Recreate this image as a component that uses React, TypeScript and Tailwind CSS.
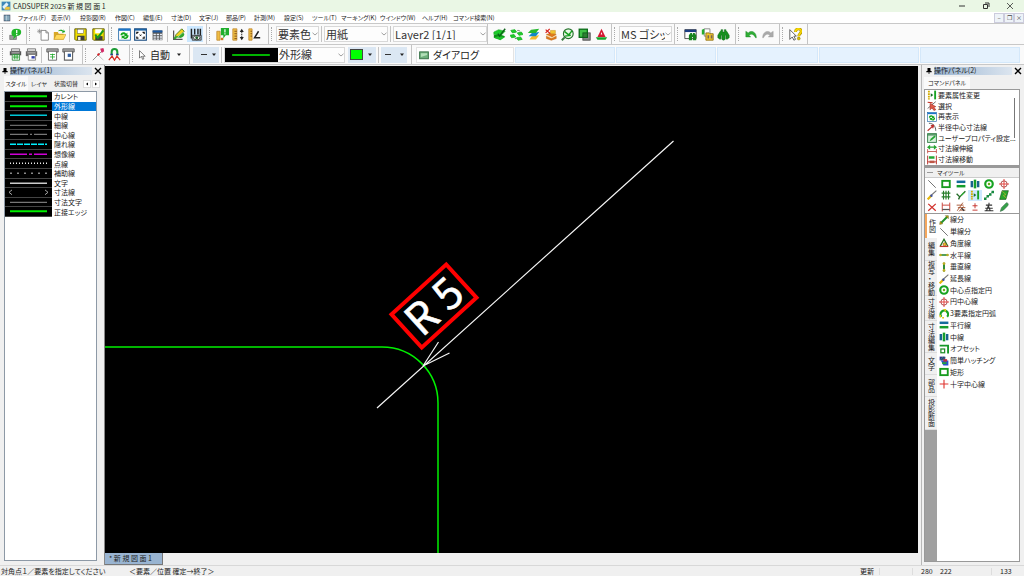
import React from 'react';

const G = '#12a51c';
const glyphs: Record<string, React.ReactNode> = {
  bubble: (<><rect x="1" y="9" width="8" height="5" fill="#9a9a9a" stroke="#777" /><path d="M9 1C5 1 3 3 3 6c0 2 1 4 3 4l-1 4 4-4c4 0 6-2 6-5S13 1 9 1z" fill="#22b52a" /><path d="M9.500 2.500v4M9.500 7.500v1.500" stroke="#fff" strokeWidth="1.600" /></>),
  newdoc: (<><path d="M5 3h6l3 3v9H5z" fill="#fff" stroke="#777" /><path d="M11 3v3h3" fill="none" stroke="#777" /><path d="M3 1v6M0 4h6M1 2l4 4M5 2L1 6" stroke="#888" strokeWidth=".8" /></>),
  open: (<><path d="M1 14V5h5l1 2h6v7z" fill="#d9a826" /><path d="M1 14l3-6h12l-3 6z" fill="#ffd95a" stroke="#b98a1c" strokeWidth=".6" /><path d="M6 4c3-3 6-2 7 0V1.500l2 3.500-4 1 1-1.500C10 3 8 3 6 4z" fill={G} /></>),
  save: (<><path d="M1 1h14v14H2l-1-1z" fill="#f2df00" stroke="#4a4600" /><rect x="4" y="1.500" width="8" height="5" fill="#fff" stroke="#555" strokeWidth=".6" /><rect x="4" y="9.500" width="9" height="5.500" fill="#3d3d3d" /><rect x="5" y="11" width="3" height="4" fill="#eee" /></>),
  savecheck: (<><path d="M1 1h14v14H2l-1-1z" fill="#f2df00" stroke="#4a4600" /><rect x="4" y="1.500" width="8" height="5" fill="#fff" /><rect x="4" y="10" width="9" height="5" fill="#3d3d3d" /><path d="M4 8l3 4 7-9" fill="none" stroke="#18981e" strokeWidth="2.500" /></>),
  refresh: (<><rect x=".8" y="1" width="14.400" height="14" fill="#fff" stroke="#1b63a5" /><path d="M1 2.200h14" stroke="#1b75c8" strokeWidth="2.500" /><path d="M3 9c0-4 5-5 7-2l1.500-1.500V10H7l1.500-1.500C7 7 5.500 8 5 9z" fill={G} /><path d="M13 9c0 5-5 6-7 3l-1.500 1.500V9.500H9L7.500 11c1.500 1.500 3 .5 3.500-2z" fill={G} /></>),
  expand: (<><rect x=".8" y="1" width="14.400" height="14" fill="#fff" stroke="#174a80" strokeWidth="1.400" /><path d="M1 2.200h14" stroke="#1b63a5" strokeWidth="2" /><path d="M3.500 7.500V5.500h2M10.500 5.500h2v2M3.500 10.500V12.500h2M10.500 12.500h2v-2" fill="none" stroke="#111" strokeWidth="1.500" /><path d="M7 8l2 2m0-2l-2 2" stroke="#111" /></>),
  grid: (<><rect x="2" y="3" width="12" height="12" fill="#555" /><rect x="2" y="3" width="12" height="2.500" fill="#1c58a0" /><path d="M3 7h3v2H3zM7 7h3v2H7zM11 7h2.500v2H11zM3 10h3v2H3zM7 10h3v2H7zM11 10h2.500v2H11zM3 13h3v1.500H3zM7 13h3v1.500H7zM11 13h2.500v1.500H11z" fill="#e8eef8" /></>),
  pencil: (<><path d="M2 3v11h11" stroke="#555" fill="none" strokeWidth="1.500" /><path d="M3 13l2-5 7-7 3 3-7 7z" fill="#f4d221" stroke="#33701a" /><path d="M2 14c1-5 5-3 7-5s5-4 6-2-3 6-6 5-4 2-7 2z" fill="#31a52e" /><path d="M5 13l8-7" stroke="#b7e5a0" /></>),
  measure: (<><path d="M3 1v12M7 1v7M11 1v7M14 1v10" stroke="#222" strokeWidth="1.800" /><path d="M4 9h11v6H4z" fill="#a8b7c0" stroke="#333" /><ellipse cx="9.500" cy="12" rx="4" ry="2.500" fill="#fff" stroke="#222" /><circle cx="9.500" cy="12" r="1.800" fill="#21602c" /></>),
  dimbubble: (<><path d="M1 4h4v11H1z" fill="#efbc42" stroke="#c08a35" /><path d="M6 12h3v3H6z" fill="#d07720" /><path d="M6 0h10v9h-4l-3 4V9H6z" fill="#1fae2c" /><path d="M11 1.500v4M11 6.500v1.500" stroke="#fff" strokeWidth="1.500" /></>),
  dimv: (<><path d="M1 1h5v14H1z" fill="#eebc42" stroke="#c08a35" /><path d="M3 4h3M3 7h3M3 10h3M3 13h3" stroke="#724312" /><path d="M12 4v8" stroke="#222" strokeWidth="1.200" strokeDasharray="2 1" /><path d="M9.500 5L12 1l2.500 4zM9.500 11L12 15l2.500-4z" fill="#222" /></>),
  diml: (<><path d="M1 1h4v14H1z" fill="#eebc42" stroke="#c08a35" /><path d="M3 4h2M3 7h2M3 10h2" stroke="#724312" /><path d="M13 4L8 12h7" fill="none" stroke="#222" strokeWidth="1.800" /></>),
  layercheck: (<><path d="M1 9l5-2 9 3-6 4-8-2z" fill="#0d8f17" /><path d="M1 5l6-3 8 2-5 5-9-1z" fill="#1ccb2a" stroke="#129c1c" strokeWidth=".6" /><path d="M1 12l5-2 9 1-6 4z" fill="#1cc02a" /><path d="M6 7l2 3 7-9" fill="none" stroke="#0c6117" strokeWidth="1.800" /></>),
  layers2: (<><path d="M1 3l5-1 2 3-5 1zM9 6l5-1 2 3-5 1zM0 9l5-1 2 3-5 1zM8 12l5-1 2 3-5 1z" fill="#1ecb2a" stroke="#18b522" /><path d="M9 3c2 0 3 0 3 1M6 13h2" stroke="#555" fill="none" /></>),
  layerstack: (<><path d="M3 14l3-4 9-1-4 5z" fill="#f3b82c" /><path d="M2 10l4-4 9-1-4 5z" fill="#1388c5" /><path d="M1 6l4-4 10-1-4 5z" fill="#25b82e" /></>),
  layerorange: (<><path d="M3 8l6-2 6 2-5 3zM3 10l6 3 6-3v3l-6 2-6-2z" fill="#e27a1c" stroke="#b4600a" strokeWidth=".6" /><path d="M3 9l7 3 5-3" stroke="#fbd08a" fill="none" /><path d="M2 2l6 5M2 6l5-5" stroke="#d8201a" strokeWidth="1.500" fill="none" /><path d="M8 3h6v4H8z" fill="#f1c532" stroke="#c98c1c" strokeWidth=".6" /></>),
  zoomlayer: (<><circle cx="9" cy="7" r="6" fill="#eaf8e7" stroke="#25722c" strokeWidth="1.400" /><path d="M4.500 11.500L1 15" stroke="#3a7a40" strokeWidth="2.500" /><path d="M4.500 4.500l5 4 4-5M5 10l7-1" stroke="#17a020" strokeWidth="1.800" fill="none" /></>),
  squares: (<><rect x="6" y="6" width="9" height="9" fill="#888" stroke="#444" /><rect x="1.500" y="1.500" width="10" height="10" fill="#3fc046" stroke="#0a6b18" strokeWidth="1.600" /><rect x="6" y="6" width="5.500" height="5.500" fill="#2f7e34" stroke="#0a5b18" /></>),
  triangle: (<><path d="M8 1l5 10H3z" fill="#d41832" /><path d="M8 5l1 3H7z" fill="#fff" /><path d="M1 11.500h14l-2 3H3z" fill="#16a62b" /></>),
  findwin: (<><path d="M1 2h14v11H1z" fill="#fff" stroke="#333" /><path d="M1 3.500h14" stroke="#1b3d82" strokeWidth="3" /><path d="M6 15V9l2-3h2v2h1V6h2l2 3v6h-4v-4h-1v4z" fill="#17831f" /></>),
  finddoc: (<><path d="M4 1h7v9H4z" fill="#fff" stroke="#777" /><path d="M1 2l3-1v7H1z" fill="#25ac2e" /><path d="M6 6h4l1 1h4v8H6z" fill="#f0c52d" stroke="#8d6b0f" /><path d="M8 9h2v4H8zM12 9h2v4h-2z" fill="#765" /></>),
  binocular: (<path d="M1 9l3-5h1V2h2v3h2V2h2v2h1l3 5v3l-3 2-1-1V9h-1v5l-2 1-2-1V9H5v4l-1 1-3-2z" fill="#178f20" stroke="#0c6a16" strokeWidth=".6" />),
  undo: (<path d="M1 4v7h6L5 9c3-3 6-1 8 3h1C14 5 8 2 4 6z" fill="#2fae35" stroke="#167b20" strokeWidth=".5" />),
  redo: (<path d="M15 4v7H9l2-2C8 6 5 8 3 12H2C2 5 8 2 12 6z" fill="#aaa" stroke="#999" strokeWidth=".5" />),
  help: (<><path d="M1 2v12l3-3 2 4 2-1-2-4h3z" fill="#fff" stroke="#444" /><path d="M8 5c0-5 7-5 7-1 0 3-3 3-3 6" fill="none" stroke="#a88b00" strokeWidth="3.500" /><path d="M8 5c0-5 7-5 7-1 0 3-3 3-3 6" fill="none" stroke="#f8d900" strokeWidth="2" /><circle cx="12" cy="13" r="1.800" fill="#d9bc00" stroke="#776300" strokeWidth=".5" /></>),
  printg: (<><path d="M3 1h10v3H3z" fill="#eee" stroke="#666" /><path d="M1 4h14v5H1z" fill="#555" /><path d="M3 6h10" stroke="#ddd" /><path d="M4 8h9v7H4z" fill="#fff" stroke="#26802f" /><path d="M5 10h7M5 12h7M7 8v6M10 8v6" stroke="#23a32d" /></>),
  printb: (<><path d="M3 1h10v3H3z" fill="#eee" stroke="#666" /><path d="M1 4h14v6H1z" fill="#666" /><path d="M3 6h10" stroke="#ddd" /><path d="M4 8h9v7H4z" fill="#fff" stroke="#777" /><path d="M8 10h4v3H8z" fill="#313eab" /></>),
  plotg: (<><path d="M1 1h14v4H1z" fill="#aaa" stroke="#555" /><path d="M3 4h10v11H3z" fill="#fff" stroke="#555" /><path d="M5 8h6M5 11h6M8 7v7" stroke="#20a82a" /></>),
  plotb: (<><path d="M1 1h14v4H1z" fill="#aaa" stroke="#555" /><path d="M3 4h10v11H3z" fill="#fff" stroke="#666" strokeWidth="1.400" /><path d="M7 7h4v4H7z" fill="#315ea0" /></>),
  snap: (<><path d="M1 15L14 2" stroke="#777" /><path d="M10 1l4-1 1 4-3 2z" fill="#d42b68" /><path d="M7 7l2 2" stroke="#d7232a" strokeWidth="2.500" /><path d="M9 10l5 5" stroke="#777" strokeDasharray="1 1" /></>),
  magnet: (<><path d="M4.500 9V5c0-5 7-5 7 0v4" fill="none" stroke="#1b9a34" strokeWidth="2.500" /><path d="M3 8h3M10 8h3" stroke="#263d91" strokeWidth="2" /><path d="M1 15l4-5 3 5 3-5 4 5" stroke="#d52f25" strokeWidth="1.500" fill="none" /></>),
  cursor: (<path d="M4 1v12l3-3 2 5 2-1-2-4h4z" fill="#fff" stroke="#333" />),
  dialog: (<><rect x="1" y="3" width="14" height="11" fill="#6eaf7c" stroke="#346f45" strokeWidth="1.500" /><path d="M3 5h10v3L3 11z" fill="#b2dfb8" /></>),
  dline: (<path d="M2 2l12 12" stroke="#555" strokeWidth="1.300" />),
  rect: (<rect x="2" y="3" width="12" height="10" fill="#fff" stroke="#189b1f" strokeWidth="3" />),
  parallel: (<><path d="M1 4.500h14" stroke="#136b9a" strokeWidth="4" /><path d="M1 11.500h14" stroke="#149d2a" strokeWidth="4" /></>),
  center: (<><path d="M3 3v10M13 3v10" stroke="#17628e" strokeWidth="4" /><path d="M8 1v14" stroke="#159d2b" strokeWidth="4" /></>),
  circle: (<><circle cx="8" cy="8" r="6" fill="#fff" stroke="#18a322" strokeWidth="3.500" /><circle cx="8" cy="8" r="2" fill="#6dac1c" /></>),
  cross: (<><circle cx="8" cy="8" r="5" fill="none" stroke="#a24a48" strokeWidth="1.500" /><path d="M8 0v16M0 8h16" stroke="#e43d38" strokeWidth="1.500" /></>),
  line: (<><path d="M2 14L14 2" stroke="#24912a" strokeWidth="3" /><path d="M1 15l1-5 4 4zM10 1h5v5z" fill="#bda41c" stroke="#52520c" strokeWidth=".6" /></>),
  ext: (<><path d="M5 10l10-9" stroke="#777" strokeWidth="1.800" /><path d="M1 15l6-6" stroke="#e4b70b" strokeWidth="3.500" /><circle cx="7" cy="9" r="2" fill="#3e51a0" /></>),
  hash: (<path d="M4 1v14M8 1v14M12 1v14M1 5h14M1 11h14" stroke="#277d2a" strokeWidth="1.800" />),
  trim: (<><path d="M1 6l5 5 9-9M6 11l-2 4" fill="none" stroke="#246c28" strokeWidth="2.200" /><path d="M8 9l5-5" stroke="#38b33e" strokeWidth="2" /></>),
  attr: (<><path d="M3 1v14" stroke="#d4ad00" strokeWidth="3" strokeDasharray="3 1" /><path d="M13 1v14" stroke="#19a424" strokeWidth="3" /><path d="M6 5l4 3-4 3z" fill="#167125" /></>),
  dots: (<><path d="M2 14L14 2" stroke="#888" /><path d="M0 12h4v4H0zM4 8h4v4H4zM8 5h4v4H8zM12 1h4v4h-4z" fill="#168b41" /></>),
  hatch: (<><path d="M5 1h10l-4 14H1z" fill="#27a62e" stroke="#174f18" /><path d="M5 2l6 5-4 2 5 4" stroke="#d1b82d" fill="none" /></>),
  x: (<path d="M2 3l12 11M14 3L2 14" stroke="#d0302b" strokeWidth="2" />),
  dim: (<><path d="M2 1v14M14 1v14M2 5h12" stroke="#c84038" fill="none" strokeWidth="1.500" /><path d="M2 12h12" stroke="#555" strokeWidth="2" /></>),
  dims: (<><path d="M2 14L11 1M5 15l7-8M1 5h11M3 9h12M7 13h8" stroke="#a75735" strokeWidth="1.500" /><path d="M9 10l4 4" stroke="#333" strokeWidth="2" /></>),
  pm: (<path d="M8 2v8M4 6h8M4 13h8" stroke="#c4322b" strokeWidth="1.500" />),
  weld: (<path d="M8 1v4M3 5h10M2 10h12M4 14l3-8 3 8M1 14h14" fill="none" stroke="#333" strokeWidth="1.700" />),
  brush: (<path d="M2 15l2-6 8-8c4 1 3 4 1 6l-6 6z" fill="#35a148" stroke="#457151" />),
  angle: (<><path d="M2 13L8 2l6 11" fill="none" stroke="#267623" strokeWidth="2" /><path d="M1 13.500h14" stroke="#c4382d" strokeWidth="2" /><circle cx="9" cy="10" r="2.500" fill="#edc829" stroke="#92431c" /></>),
  hline: (<><path d="M1 8h14" stroke="#25862a" strokeWidth="2.500" /><circle cx="2.500" cy="8" r="2" fill="#c0ad24" /><circle cx="13.500" cy="8" r="2" fill="#c0ad24" /></>),
  vline: (<><path d="M8 1v14" stroke="#25862a" strokeWidth="3" /><circle cx="8" cy="2.500" r="2.200" fill="#c0ad24" /><circle cx="8" cy="13.500" r="2.200" fill="#c0ad24" /></>),
  arc3: (<><path d="M4 12.500a6 6 0 1 1 9 0" fill="none" stroke="#18a322" strokeWidth="3.500" /><path d="M2 9v4M5 14h3M7 0h3v4" stroke="#e4c817" strokeWidth="2.500" fill="none" /></>),
  offset: (<><path d="M1 2.500h13.500V15" fill="none" stroke="#18982a" strokeWidth="3" /><rect x="3" y="8" width="6" height="6" fill="#fff" stroke="#228e29" strokeWidth="2" /></>),
  qhatch: (<><path d="M1 1h9v6H1z" fill="#31308f" /><path d="M2 6l5-5M5 7l5-5" stroke="#3dc341" /><path d="M3 7h12v8H7z" fill="#2753d2" /><path d="M7 5h6v4H7z" fill="#bb3240" /><path d="M5 10h7v3H5z" fill="#24a33c" /></>),
  plus: (<path d="M8 1v14M1 8h14" stroke="#e03530" strokeWidth="1.800" />),
  select: (<><path d="M1 2l8 1" stroke="#c23226" strokeWidth="2" fill="none" /><path d="M14 1L1 12" stroke="#444" strokeWidth="1.200" /><path d="M5 4v10l3-3 3 4 3-1-3-4 3-1z" fill="#e05a48" stroke="#a52b22" /></>),
  radius: (<><path d="M3 2c7 0 11 5 11 12" fill="none" stroke="#555" strokeWidth="1.500" /><path d="M1 14L11 5M11 5l-5 1M11 5l-2 5" stroke="#bb2e2b" strokeWidth="1.800" fill="none" /></>),
  prop: (<><rect x="1" y="1" width="14" height="14" fill="#d9f0dc" stroke="#35814a" strokeWidth="1.500" /><path d="M1 3h14" stroke="#35814a" strokeWidth="2" /><path d="M4 13l2-4 6-5 2 2-6 5z" fill="#22a532" /></>),
  stretch: (<><path d="M1 8v7M15 8v7M1 12h14" stroke="#c0443b" strokeWidth="1.300" /><path d="M5 4V1L0 5l5 4V6h6v3l5-4-5-4v3z" fill="#26a42f" /></>),
  move: (<><path d="M1 1v14M15 1v14M1 11h14" stroke="#b83129" strokeWidth="1.500" /><path d="M3 2h9v4H3z" fill="#25a733" /><path d="M4 9h8v4H4z" fill="#be5646" /></>),
  app: (<><rect x="1" y="1" width="14" height="14" fill="#3e88b8" /><path d="M2 9L9 2l3 4-7 7z" fill="#e4f3fa" /><path d="M8 9h6v5H5z" fill="#f0c43b" /></>),
  menuapp: (<><rect x="2" y="2" width="12" height="12" fill="#6a92ab" stroke="#445" /><path d="M3 6h10M3 10h10M7 3v10" stroke="#dce8ee" /></>),
};

function Icon({ n, className = 'size-3.5' }: { n: string; className?: string }) {
  return <svg viewBox="0 0 16 16" aria-hidden="true" className={`shrink-0 ${className}`}>{glyphs[n]}</svg>;
}

function Tool({ n, label, className = 'w-4' }: { n: string; label: string; className?: string }) {
  return <button type="button" aria-label={label} className={`flex h-4 shrink-0 items-center justify-center ${className}`}><Icon n={n} className="size-[13px]" /></button>;
}

function Group({ className, children }: { className: string; children: React.ReactNode }) {
  return (
    <div className={`flex h-full shrink-0 items-center border-r border-[#c4c4c4] pl-0.5 ${className}`}>
      <span className="mr-1 h-3.5 shrink-0 border-l border-dotted border-[#aaa]" />
      {children}
    </div>
  );
}

const Sep = () => <span className="mx-0.5 h-4 w-px shrink-0 bg-[#c4c4c4]" />;
const Down = () => <svg viewBox="0 0 6 4" aria-hidden="true" className="h-1 w-1.5 shrink-0"><path d="M1 .5h4L3 3z" fill="#222" /></svg>;

function Combo({ label, value, className, children }: { label: string; value: string; className: string; children?: React.ReactNode }) {
  return (
    <div className={`flex h-4 shrink-0 items-center border border-[#d8d8d8] bg-[#fdfdfd] ${className}`}>
      {children}
      <select aria-label={label} className="h-full min-w-0 grow appearance-none bg-transparent pl-px text-[11px] leading-none text-[#333] outline-none">
        <option>{value}</option>
      </select>
      <svg viewBox="0 0 6 4" aria-hidden="true" className="h-1 w-1.5 shrink-0"><path d="M.5 .8L3 3 5.500 .8" fill="none" stroke="#888" strokeWidth=".8" /></svg>
    </div>
  );
}

const menus = ['ファイル(F)', '表示(V)', '投影図(R)', '作図(C)', '編集(E)', '寸法(D)', '文字(J)', '部品(P)', '計測(M)', '設定(S)', 'ツール(T)', 'マーキング(K)', 'ウインドウ(W)', 'ヘルプ(H)', 'コマンド検索(N)'];

const styles: [string, string, number, string][] = [
  ['カレント', '#00f000', 2, ''], ['外形線', '#00f000', 2, ''], ['中線', '#00c8d8', 1.5, ''], ['細線', '#888', 1, ''],
  ['中心線', '#999', 1, '18 2 2 2'], ['隠れ線', '#00f0ff', 1.5, '6 1'], ['想像線', '#d000d8', 1.5, '17 2 3 2'], ['点線', '#eee', 1.5, '1 2'],
  ['補助線', '#888', 1.5, '2 5'], ['文字', '#ccc', 1.5, ''], ['寸法線', 'arrow', 1, ''], ['寸法文字', '#999', 1, ''], ['正接エッジ', '#00f000', 2, ''],
];

const commands: [string, string][] = [['attr', '要素属性変更'], ['select', '選択'], ['refresh', '再表示'], ['radius', '半径中心寸法線'], ['prop', 'ユーザープロパティ設定...'], ['stretch', '寸法線伸縮'], ['move', '寸法線移動']];

const drawTools: [string, string][] = [['line', '線分'], ['dline', '単線分'], ['angle', '角度線'], ['hline', '水平線'], ['vline', '垂直線'], ['ext', '延長線'], ['circle', '中心点指定円'], ['cross', '円中心線'], ['arc3', '3要素指定円弧'], ['parallel', '平行線'], ['center', '中線'], ['offset', 'オフセット'], ['qhatch', '簡単ハッチング'], ['rect', '矩形'], ['plus', '十字中心線']];

const myTools = ['dline', 'rect', 'parallel', 'center', 'circle', 'cross', 'ext', 'hash', 'trim', 'attr', 'dots', 'hatch', 'x', 'dim', 'dims', 'pm', 'weld', 'brush'];

const sideTabs: [string, string][] = [['編集', 'h-[23px]'], ['複写・移動', 'h-[35px]'], ['寸法線', 'h-[25px]'], ['寸法編集', 'h-[32px]'], ['文字', 'h-[22px]'], ['部品', 'h-[22px]'], ['投影断面', 'h-[33px]']];

function PanelTitle({ children }: { children: string }) {
  return (
    <header className="flex h-[11px] shrink-0 items-center text-[7px] leading-none">
      <svg viewBox="0 0 8 8" aria-hidden="true" className="mx-0.5 size-1.5 shrink-0"><path d="M2 0h4v4h1.500v1.500h-3V8h-1V5.500h-3V4H2z" fill="#000" /></svg>
      <h2 className="flex h-2 grow items-center bg-linear-to-r from-[#99b4d1] to-[#dce5ef] whitespace-nowrap">{children}</h2>
      <button type="button" aria-label="パネルを閉じる" className="mx-0.5 flex size-2 shrink-0 items-center">
        <svg viewBox="0 0 8 8" className="size-2"><path d="M1 1l6 6M7 1L1 7" stroke="#000" strokeWidth="1.400" /></svg>
      </button>
    </header>
  );
}

function LeftPanel() {
  return (
    <aside className="flex w-[105px] shrink-0 flex-col border-r border-[#888] bg-[#f0f0f0]">
      <PanelTitle>操作パネル(1)</PanelTitle>
      <div role="tablist" className="flex h-[15px] shrink-0 items-center pl-1 text-[6px] leading-none whitespace-nowrap">
        <button type="button" role="tab" aria-selected="true" className="h-full w-[24px] bg-[#fafafa]">スタイル</button>
        <button type="button" role="tab" aria-selected="false" className="h-3 w-[22px]">レイヤ</button>
        <button type="button" role="tab" aria-selected="false" className="h-3 w-[32px]">状態切替</button>
        <button type="button" aria-label="前のタブ" className="ml-px flex size-2 items-center justify-center border border-[#ddd] bg-white"><svg viewBox="0 0 4 4" className="size-1"><path d="M3 .5v3L1 2z" /></svg></button>
        <button type="button" aria-label="次のタブ" className="ml-px flex size-2 items-center justify-center border border-[#ddd] bg-white"><svg viewBox="0 0 4 4" className="size-1"><path d="M1 .5v3L3 2z" /></svg></button>
      </div>
      <div className="mr-[7px] mb-1 ml-1 min-h-0 grow border border-[#8d99a6] bg-white">
        <ul className="grid h-[125px] grid-rows-13">
          {styles.map(([name, color, w, dash], i) => (
            <li key={name} className="min-h-0">
              <button type="button" className="flex size-full items-stretch text-left text-[7px] leading-none">
                <svg viewBox="0 0 47 9" preserveAspectRatio="none" aria-hidden="true" className="h-full w-[47px] shrink-0 border-b border-[#444] bg-black">
                  {color === 'arrow' ? <path d="M7 2L4 4.500l3 2.500M40 2l3 2.500-3 2.500" fill="none" stroke="#aaa" /> : <path d="M5 4.500h37" stroke={color} strokeWidth={w} strokeDasharray={dash || undefined} />}
                </svg>
                <span className={`flex grow items-center pl-0.5 ${i === 1 ? 'bg-[#0078d7] text-white' : ''}`}>{name}</span>
              </button>
            </li>
          ))}
        </ul>
      </div>
    </aside>
  );
}

function RightPanel() {
  return (
    <aside className="ml-[3px] flex w-[103px] shrink-0 flex-col border-l border-[#b8b8b8] bg-[#f0f0f0] pl-0.5">
      <PanelTitle>操作パネル(2)</PanelTitle>
      <div role="tablist" className="flex h-[13px] shrink-0 items-end">
        <button type="button" role="tab" aria-selected="true" className="flex h-3 items-center bg-[#fafafa] px-1 text-[6px] leading-none whitespace-nowrap">コマンドパネル</button>
      </div>
      <div className="mr-1 flex h-[77px] shrink-0 border border-[#999] bg-white">
        <ul className="grid min-w-0 grow grid-rows-7">
          {commands.map(([n, t]) => (
            <li key={t} className="min-h-0"><button type="button" className="flex size-full items-center gap-px pl-0.5 text-[7px] leading-none whitespace-nowrap"><Icon n={n} className="size-2.5" />{t}</button></li>
          ))}
        </ul>
        <span className="mt-2 mr-1 h-10 w-px shrink-0 bg-[#777]" />
      </div>
      <section className="mr-1 mb-[3px] flex min-h-0 grow flex-col border-x border-t-2 border-[#999] bg-white">
        <h3 className="flex h-[10px] shrink-0 items-center gap-1 border-b border-[#ccc] bg-[#f0f0f0] pl-0.5 text-[6px] leading-none"><span className="w-1.5 border-t border-[#999]" />マイツール</h3>
        <div className="grid h-[35px] shrink-0 grid-cols-6 grid-rows-3 pr-2">
          {myTools.map((n, i) => (
            <button key={n} type="button" aria-label={`ツール ${i + 1}`} className={`flex min-h-0 items-center justify-center ${i === 9 ? 'bg-[#cce8ff]' : ''}`}><Icon n={n} className="size-2.5" /></button>
          ))}
        </div>
        <div className="flex min-h-0 grow border-y border-[#999]">
          <div role="tablist" aria-orientation="vertical" className="flex w-3 shrink-0 flex-col bg-[#a0a0a0] text-[7px] leading-none">
            <button type="button" role="tab" aria-selected="true" className="flex h-[24px] shrink-0 items-center justify-center border-l-2 border-[#f5a75c] bg-white [writing-mode:vertical-rl]">作図</button>
            {sideTabs.map(([t, h]) => (
              <button key={t} type="button" role="tab" aria-selected="false" className={`flex w-full shrink-0 items-center justify-center border-b border-[#ddd] bg-[#f0f0f0] whitespace-nowrap [writing-mode:vertical-rl] ${h}`}>{t}</button>
            ))}
          </div>
          <ul className="grid h-[176px] grow grid-rows-15">
            {drawTools.map(([n, t]) => (
              <li key={t} className="min-h-0"><button type="button" className="flex size-full items-center gap-px pl-0.5 text-[7px] leading-none whitespace-nowrap"><Icon n={n} className="size-2.5" />{t}</button></li>
            ))}
          </ul>
        </div>
      </section>
    </aside>
  );
}

function Drawing() {
  return (
    <svg viewBox="105 66 813 487" preserveAspectRatio="xMinYMin meet" className="min-h-0 w-full grow bg-black" role="img" aria-label="図面">
      <path d="M105 347H382A56 56 0 0 1 438 403V553" fill="none" stroke="#00f000" strokeWidth="1.500" />
      <path d="M673.500 141L377 408M423 366L438.500 342M423 366L449.500 353" fill="none" stroke="#f4f4f4" strokeWidth="1.200" />
      <g transform="translate(434 306) rotate(-42.300)">
        <rect x="-37" y="-22.500" width="74" height="45" fill="none" stroke="#f00" strokeWidth="4" />
        <text x="0" y="15.500" textAnchor="middle" fontSize="43" fill="#fff" stroke="#fff" strokeWidth=".6" className="font-['Noto_Sans_CJK_JP',sans-serif]">R 5</text>
      </g>
    </svg>
  );
}

export default function App() {
  return (
    <div className="flex h-screen flex-col overflow-hidden bg-[#f0f0f0] font-['Noto_Sans_CJK_JP',sans-serif] text-[#222] [font-feature-settings:'palt']">
      <header className="flex h-3 shrink-0 items-center bg-[#eaf7e5] pl-px">
        <Icon n="app" className="size-2.5" />
        <h1 className="ml-0.5 text-[7px] leading-none">CADSUPER 2025 新 規 図 面 1</h1>
        <div className="mr-0.5 ml-auto flex">
          <button type="button" aria-label="最小化" className="flex w-6 justify-center"><svg viewBox="0 0 8 8" className="size-2"><path d="M1 4h6" stroke="#333" /></svg></button>
          <button type="button" aria-label="元に戻す" className="flex w-6 justify-center"><svg viewBox="0 0 8 8" className="size-2"><path d="M1.500 2.500h4v4h-4zM3 1h4v4" fill="none" stroke="#333" /></svg></button>
          <button type="button" aria-label="閉じる" className="flex w-6 justify-center"><svg viewBox="0 0 8 8" className="size-2"><path d="M1 1l6 6M7 1L1 7" stroke="#333" strokeWidth=".8" /></svg></button>
        </div>
      </header>
      <nav className="flex h-[11px] shrink-0 items-center bg-white pl-[3px]">
        <Icon n="menuapp" className="size-2" />
        <div className="ml-[7px] grid grid-cols-[33px_29px_35px_28px_28px_28px_27px_28px_30px_28px_29px_39px_42px_31px_50px] text-[6px] leading-none whitespace-nowrap">
          {menus.map((m) => <button key={m} type="button" className="text-left">{m}</button>)}
        </div>
        <div className="ml-auto flex text-[6px] leading-none text-[#444]">
          <button type="button" aria-label="図面を最小化" className="h-2.5 w-2.5 border border-[#ccd] bg-[#eef3f8]">–</button>
          <button type="button" aria-label="図面を元に戻す" className="h-2.5 w-2.5 border border-[#ccd] bg-[#eef3f8]">❐</button>
          <button type="button" aria-label="図面を閉じる" className="h-2.5 w-2.5 border border-[#ccd] bg-[#eef3f8]">×</button>
        </div>
      </nav>
      <div className="flex h-[22px] shrink-0 items-center border-y border-[#c8c8c8] bg-[#fafafa]">
        <Group className="w-[27px]"><Tool n="bubble" label="お知らせ" /></Group>
        <Group className="w-[82px]"><Tool n="newdoc" label="新規" className="ml-px w-4" /><Tool n="open" label="開く" /><Sep /><Tool n="save" label="保存" /><Tool n="savecheck" label="確認して保存" className="ml-0.5 w-4" /></Group>
        <Group className="w-[98px]"><Tool n="refresh" label="再表示" /><Tool n="expand" label="全体表示" /><Tool n="grid" label="表" className="ml-px w-4" /><Sep /><Tool n="pencil" label="編集" /><Tool n="measure" label="表示切替" className="ml-px w-4 bg-[#cce8ff]" /></Group>
        <Group className="w-[62px]"><Tool n="dimbubble" label="寸法" /><Tool n="dimv" label="縦寸法" /><Tool n="diml" label="角度寸法" /></Group>
        <Group className="w-[219px]"><Combo label="要素色" value="要素色" className="w-[43px]" /><Sep /><Combo label="用紙" value="用紙" className="w-[64px]" /><Sep /><Combo label="レイヤ" value="Layer2 [1/1]" className="w-[94px]" /></Group>
        <div className="flex h-full w-[124px] shrink-0 items-center border-r border-[#c4c4c4] pl-[3px]">
          {['layercheck', 'layers2', 'layerstack', 'layerorange', 'zoomlayer', 'squares', 'triangle'].map((n, i) => <Tool key={n} n={n} label={`レイヤ操作 ${i + 1}`} className="w-[17px]" />)}
        </div>
        <Group className="w-[63px]"><Combo label="フォント" value="MS ゴシック" className="w-[53px]" /></Group>
        <Group className="w-[61px]"><Tool n="findwin" label="検索" className="w-[17px]" /><Tool n="finddoc" label="図面検索" /><Tool n="binocular" label="要素検索" /></Group>
        <Group className="w-[44px]"><Tool n="undo" label="元に戻す" /><Tool n="redo" label="やり直し" /></Group>
        <Group className="w-[28px]"><Tool n="help" label="ヘルプ" /></Group>
      </div>
      <div className="flex h-[20px] shrink-0 items-center border-b border-[#c8c8c8] bg-[#fafafa]">
        <Group className="w-[83px]"><Tool n="printg" label="印刷" /><Tool n="printb" label="印刷設定" /><Sep /><Tool n="plotg" label="プロット" /><Tool n="plotb" label="プロット設定" /></Group>
        <Group className="w-[47px]"><Tool n="snap" label="スナップ" /><Tool n="magnet" label="吸着" /></Group>
        <Group className="w-[60px]">
          <Icon n="cursor" className="size-2.5" />
          <button type="button" className="ml-[3px] flex items-center gap-1.5 text-[10px] leading-none whitespace-nowrap">自動<Down /></button>
        </Group>
        <div className="ml-[3px] flex shrink-0 items-center">
          <button type="button" aria-label="線種" className="flex h-4 w-[26px] items-center justify-end gap-1 bg-[#dbe7f3] pr-0.5"><span className="w-1.5 border-t border-[#333]" /><Down /></button>
          <Sep />
          <Combo label="線スタイル" value="外形線" className="w-[121px]">
            <svg viewBox="0 0 52 13" aria-hidden="true" className="h-3.5 w-[53px] shrink-0 bg-black"><path d="M7 6.500h37" stroke="#00f000" strokeWidth="1.500" /></svg>
          </Combo>
          <button type="button" aria-label="線の色" className="ml-[3px] flex h-4 w-[28px] items-center gap-1 bg-[#dbe7f3] pl-0.5"><span className="h-[11px] w-[13px] border border-[#444] bg-[#00ff00]" /><Down /></button>
          <Sep />
          <button type="button" aria-label="線幅" className="flex h-4 w-[26px] items-center justify-between bg-[#dbe7f3] pr-0.5 pl-1"><span className="w-1.5 border-t border-[#333]" /><Down /></button>
        </div>
        <div className="ml-1 flex h-full min-w-0 grow items-center gap-px border-l border-[#c4c4c4] px-1">
          <button type="button" className="flex h-4 w-[98px] shrink-0 items-center gap-1 border border-[#e4e4e4] bg-white pl-0.5 text-[10px] leading-none whitespace-nowrap"><Icon n="dialog" className="size-2.5" />ダイアログ</button>
          {[0, 1, 2, 3, 4].map((i) => <span key={i} className="h-4 grow border border-[#d4e8fa] bg-[#e5f2fe]" />)}
        </div>
      </div>
      <div className="flex min-h-0 grow">
        <LeftPanel />
        <main className="flex min-w-0 grow flex-col pt-px">
          <Drawing />
          <div className="flex h-3 shrink-0">
            <button type="button" className="flex h-full w-[58px] items-center border-r border-b border-[#777] bg-[#99b4d1] pl-1 text-[7px] leading-none whitespace-nowrap">* 新 規 図 面 1</button>
          </div>
        </main>
        <RightPanel />
      </div>
      <footer className="flex h-[11px] shrink-0 items-center border-t border-[#d8d8d8] text-[7px] leading-none whitespace-nowrap">
        <span className="w-[129px] pl-px">対角点１／要素を指定してください</span>
        <span>＜要素／位置 確定→終了＞</span>
        <span className="ml-auto w-[19px]">更新</span>
        <span className="w-[34px] border-x border-[#ddd]">&nbsp;</span>
        <span className="w-[27px] pl-2">280</span>
        <span className="w-[51px]">222</span>
        <span className="w-[33px] border-l border-[#ddd] pl-2">133</span>
      </footer>
    </div>
  );
}
